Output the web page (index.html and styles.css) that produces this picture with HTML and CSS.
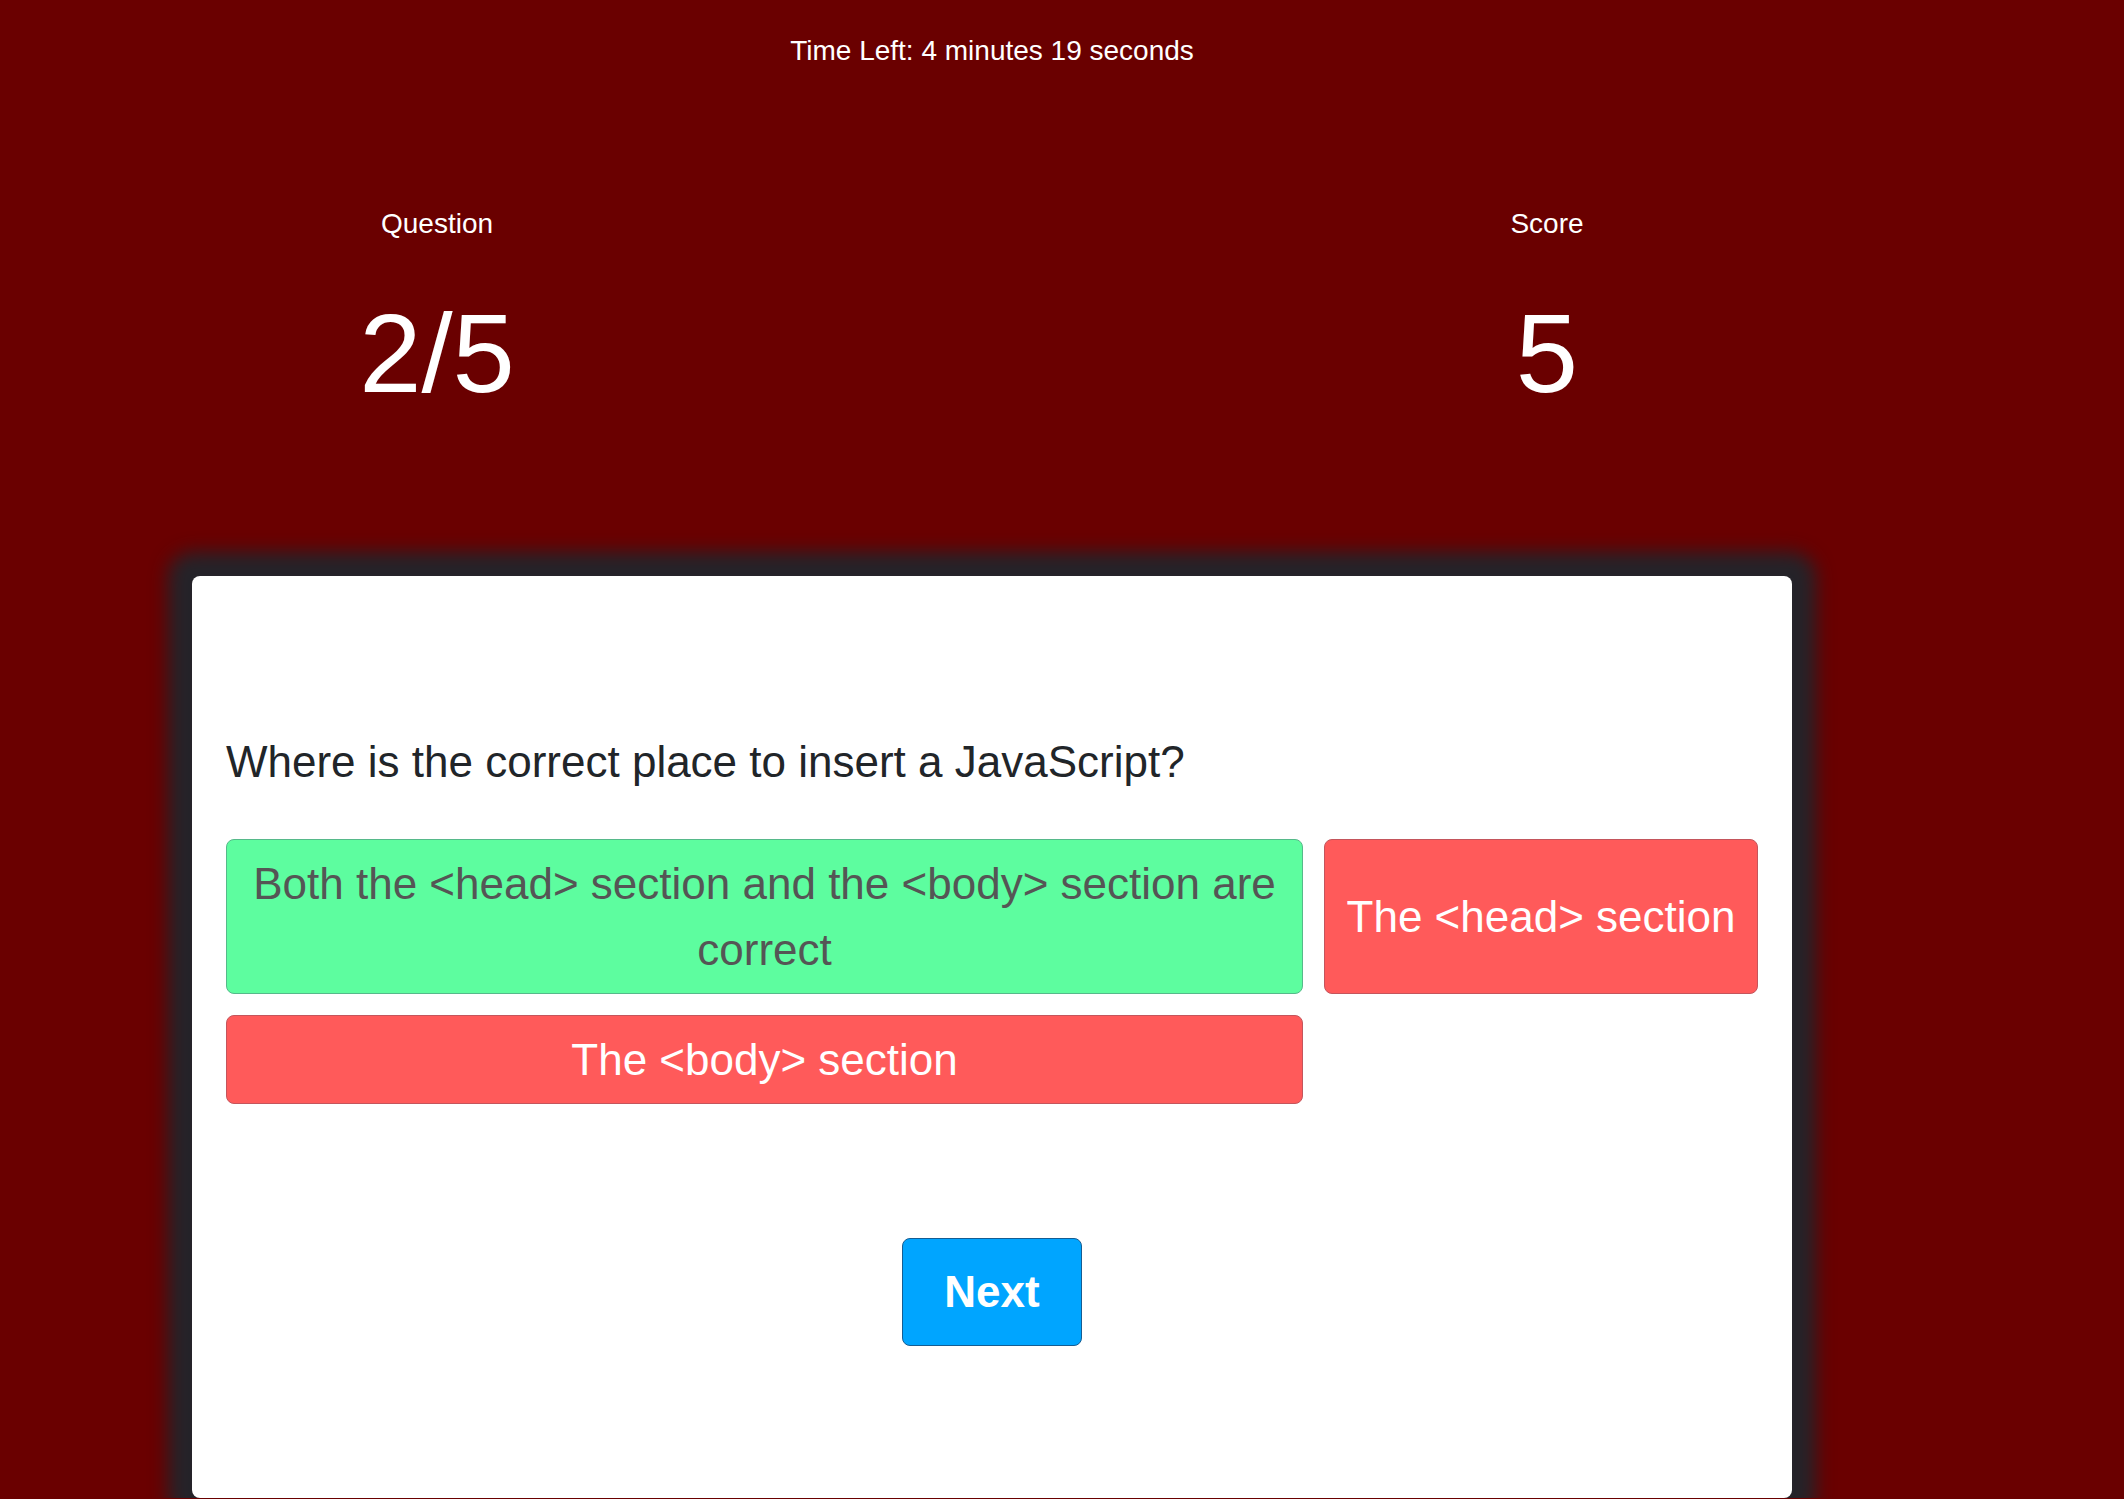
FILE: index.html
```html
<!DOCTYPE html>
<html lang="en">
<head>
<meta charset="utf-8">
<title>Quiz</title>
<link rel="stylesheet" href="styles.css">
</head>
<body>
<div class="container">
  <div class="timer">Time Left: 4 minutes 19 seconds</div>
  <div class="stats">
    <div class="stat">
      <div class="stat-label">Question</div>
      <div class="stat-value">2/5</div>
    </div>
    <div class="stat">
      <div class="stat-label">Score</div>
      <div class="stat-value">5</div>
    </div>
  </div>
  <div class="card">
    <div class="question">Where is the correct place to insert a JavaScript?</div>
    <div class="options">
      <div class="option correct">Both the &lt;head&gt; section and the &lt;body&gt; section are correct</div>
      <div class="option wrong">The &lt;head&gt; section</div>
      <div class="option wrong">The &lt;body&gt; section</div>
    </div>
    <div class="actions">
      <button class="next">Next</button>
    </div>
  </div>
</div>
</body>
</html>
```

FILE: styles.css
```css
html, body {
  margin: 0;
  padding: 0;
}

body {
  background: #6a0000;
  font-family: "Liberation Sans", Arial, sans-serif;
  color: #ffffff;
  padding-top: 35px;
}

.container {
  width: 1600px;
  margin-left: 192px;
}

.timer {
  text-align: center;
  font-size: 28px;
  line-height: 32px;
}

.stats {
  display: flex;
  justify-content: space-between;
  margin-top: 141px;
}

.stat {
  width: 490px;
  text-align: center;
}

.stat-label {
  font-size: 28px;
  line-height: 32px;
}

.stat-value {
  font-size: 112px;
  line-height: 128px;
  margin-top: 50px;
}

.card {
  margin-top: 158px;
  background: #ffffff;
  border-radius: 8px;
  box-shadow: 0 0 18px 24px #252329;
  padding: 161px 34px 152px;
  color: #212529;
}

.question {
  font-size: 44px;
  line-height: 50px;
}

.options {
  display: grid;
  grid-template-columns: 1fr auto;
  gap: 21px;
  margin-top: 52px;
}

.option {
  display: flex;
  align-items: center;
  justify-content: center;
  text-align: center;
  font-size: 44px;
  line-height: 66px;
  padding: 10.5px 21.5px;
  border: 1px solid;
  border-radius: 8px;
}

.correct {
  background: #5dfd9f;
  border-color: #56b98a;
  color: #555555;
}

.wrong {
  background: #ff5a5a;
  border-color: #c4555c;
  color: #ffffff;
}

.actions {
  display: flex;
  justify-content: center;
  margin-top: 134px;
}

.next {
  font-family: "Liberation Sans", Arial, sans-serif;
  font-weight: bold;
  font-size: 44px;
  line-height: 66px;
  padding: 20px 41px;
  background: #00a5ff;
  color: #ffffff;
  border: 1px solid #165d92;
  border-radius: 8px;
}
```
